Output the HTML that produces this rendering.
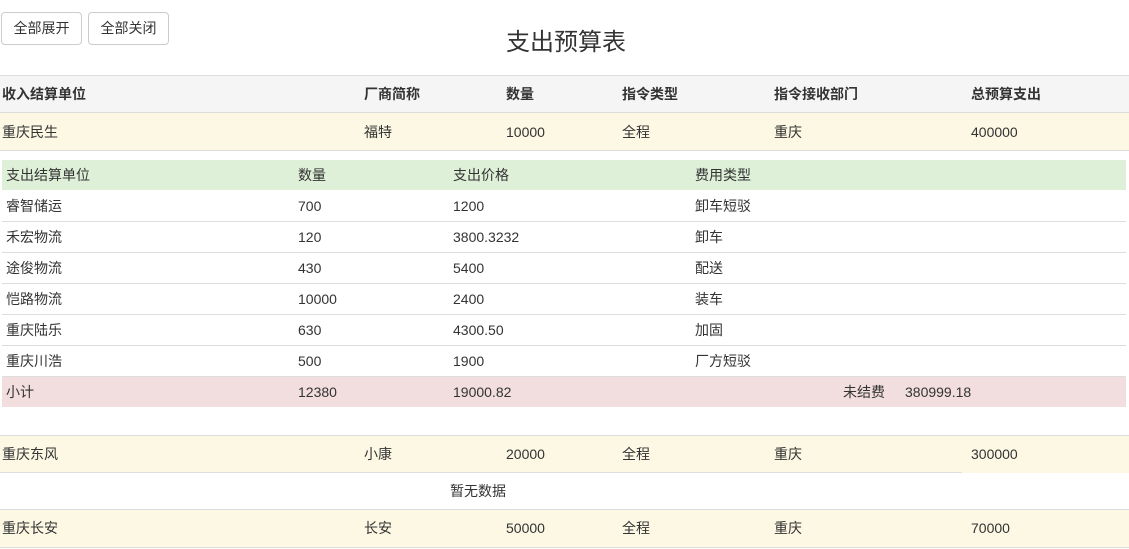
<!DOCTYPE html><html><head><meta charset="utf-8"><style>
body{margin:0;width:1129px;height:549px;position:relative;background:#fff;font-family:"Liberation Sans","Noto Sans CJK SC",sans-serif;font-size:14px;color:#333;overflow:hidden}
.a{position:absolute}
.btn{position:absolute;top:12px;height:31px;border:1px solid #ccc;border-radius:4px;background:#fff;line-height:31px;text-align:center;font-size:14px}
.r{position:absolute;left:0;width:1129px}
.t{position:absolute;white-space:nowrap}
</style></head><body>
<div class="btn" style="left:1px;width:79px">全部展开</div>
<div class="btn" style="left:88px;width:79px">全部关闭</div>
<div class="t" style="left:506px;top:28px;font-size:24px;line-height:30px">支出预算表</div>

<div class="r" style="top:75px;height:36px;background:#f5f5f5;border-top:1px solid #ddd;border-bottom:2px solid #ddd;font-weight:bold;line-height:36px">
<span class="t" style="left:2px">收入结算单位</span><span class="t" style="left:364px">厂商简称</span><span class="t" style="left:506px">数量</span><span class="t" style="left:622px">指令类型</span><span class="t" style="left:774px">指令接收部门</span><span class="t" style="left:971px">总预算支出</span></div>

<div class="r" style="top:113px;height:37px;background:#fcf8e3;border-bottom:1px solid #ddd;line-height:38px">
<span class="t" style="left:2px">重庆民生</span><span class="t" style="left:364px">福特</span><span class="t" style="left:506px">10000</span><span class="t" style="left:622px">全程</span><span class="t" style="left:774px">重庆</span><span class="t" style="left:971px">400000</span></div>

<div class="a" style="left:2px;top:160px;width:1124px;height:30px;background:#dff0d8;line-height:30px">
<span class="t" style="left:4px">支出结算单位</span><span class="t" style="left:296px">数量</span><span class="t" style="left:451px">支出价格</span><span class="t" style="left:693px">费用类型</span></div>

<div class="a" style="left:2px;top:191px;width:1124px">
<div style="position:relative;height:31px;border-bottom:1px solid #ddd;box-sizing:border-box;line-height:31px"><span class="t" style="left:4px">睿智储运</span><span class="t" style="left:296px">700</span><span class="t" style="left:451px">1200</span><span class="t" style="left:693px">卸车短驳</span></div>
<div style="position:relative;height:31px;border-bottom:1px solid #ddd;box-sizing:border-box;line-height:31px"><span class="t" style="left:4px">禾宏物流</span><span class="t" style="left:296px">120</span><span class="t" style="left:451px">3800.3232</span><span class="t" style="left:693px">卸车</span></div>
<div style="position:relative;height:31px;border-bottom:1px solid #ddd;box-sizing:border-box;line-height:31px"><span class="t" style="left:4px">途俊物流</span><span class="t" style="left:296px">430</span><span class="t" style="left:451px">5400</span><span class="t" style="left:693px">配送</span></div>
<div style="position:relative;height:31px;border-bottom:1px solid #ddd;box-sizing:border-box;line-height:31px"><span class="t" style="left:4px">恺路物流</span><span class="t" style="left:296px">10000</span><span class="t" style="left:451px">2400</span><span class="t" style="left:693px">装车</span></div>
<div style="position:relative;height:31px;border-bottom:1px solid #ddd;box-sizing:border-box;line-height:31px"><span class="t" style="left:4px">重庆陆乐</span><span class="t" style="left:296px">630</span><span class="t" style="left:451px">4300.50</span><span class="t" style="left:693px">加固</span></div>
<div style="position:relative;height:31px;border-bottom:1px solid #ddd;box-sizing:border-box;line-height:31px"><span class="t" style="left:4px">重庆川浩</span><span class="t" style="left:296px">500</span><span class="t" style="left:451px">1900</span><span class="t" style="left:693px">厂方短驳</span></div>
<div style="position:relative;height:30px;background:#f2dede;line-height:30px"><span class="t" style="left:4px">小计</span><span class="t" style="left:296px">12380</span><span class="t" style="left:451px">19000.82</span><span class="t" style="left:841px">未结费</span><span class="t" style="left:903px">380999.18</span></div>
</div>

<div class="r" style="top:435px;height:37px;background:#fcf8e3;border-top:1px solid #ddd;line-height:37px">
<span class="t" style="left:2px">重庆东风</span><span class="t" style="left:364px">小康</span><span class="t" style="left:506px">20000</span><span class="t" style="left:622px">全程</span><span class="t" style="left:774px">重庆</span><span class="t" style="left:971px">300000</span></div>
<div class="a" style="left:0;top:472px;width:962px;height:1px;background:#ddd"></div>
<div class="t" style="left:450px;top:482px;line-height:18px">暂无数据</div>

<div class="r" style="top:509px;height:37px;background:#fcf8e3;border-top:1px solid #ddd;border-bottom:1px solid #ddd;line-height:37px">
<span class="t" style="left:2px">重庆长安</span><span class="t" style="left:364px">长安</span><span class="t" style="left:506px">50000</span><span class="t" style="left:622px">全程</span><span class="t" style="left:774px">重庆</span><span class="t" style="left:971px">70000</span></div>
</body></html>
